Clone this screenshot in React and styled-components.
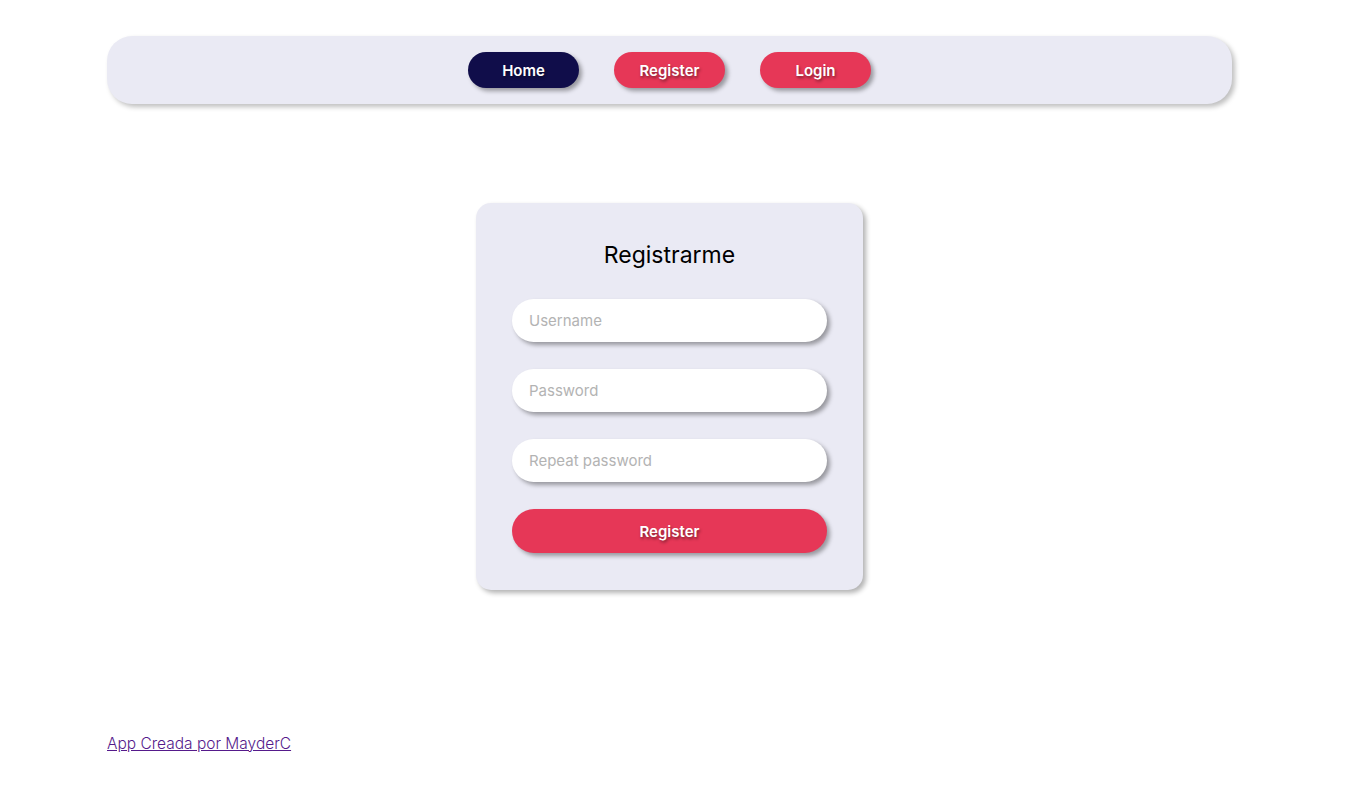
import React from 'react'
import styled, { createGlobalStyle } from 'styled-components'

const GlobalStyle = createGlobalStyle`
    body {
        margin: 0;
        background-color: #ffffff;
        font-family: Inter, "Noto Sans", sans-serif;
    }
`

const Page = styled.div`
    width: 1125px;
    margin-left: 107px;
    padding-top: 36px;
    min-height: 757px;
    display: flex;
    flex-direction: column;
`

const Nav = styled.nav`
    height: 68px;
    border-radius: 25px;
    background-color: #eaeaf4;
    box-shadow: 3px 3px 5px rgba(0,0,0,0.25);
    display: flex;
    align-items: center;
    justify-content: center;
    gap: 35px;
`

const NavBtn = styled.button`
    width: 111px;
    height: 36px;
    border: none;
    border-radius: 18px;
    background-color: ${({ $active }) => ($active ? '#100d4a' : '#e63757')};
    color: #ffffff;
    font-family: inherit;
    font-size: 15px;
    font-weight: 600;
    text-shadow: 1px 2px 3px rgba(0,0,0,0.45);
    box-shadow: 3px 3px 4px rgba(0,0,0,0.35);
    cursor: pointer;
`

const Main = styled.main`
    display: flex;
    justify-content: center;
    padding-top: 99px;
    flex: 1;
`

const Card = styled.form`
    width: 387px;
    box-sizing: border-box;
    padding: 36px 36px 37px;
    border-radius: 15px;
    background-color: #eaeaf4;
    box-shadow: 3px 3px 5px rgba(0,0,0,0.3);
    display: flex;
    flex-direction: column;
    gap: 27px;
    align-self: flex-start;
`

const Title = styled.h2`
    margin: 0 0 1px;
    text-align: center;
    font-size: 23px;
    font-weight: 400;
    color: #000000;
    line-height: 32px;
`

const Input = styled.input`
    height: 43px;
    box-sizing: border-box;
    border: none;
    border-radius: 22px;
    background-color: #ffffff;
    padding: 0 17px;
    font-family: inherit;
    font-size: 15px;
    box-shadow: 3px 3px 4px rgba(0,0,0,0.35);
    outline: none;
    &::placeholder {
        color: #b3b3b3;
    }
`

const Submit = styled(NavBtn)`
    width: 100%;
    height: 44px;
    border-radius: 22px;
`

const Footer = styled.footer`
    padding-bottom: 40px;
    font-size: 15.5px;
    font-weight: 300;
`

const Link = styled.a`
    color: #551a8b;
`

function App() {
  return (
    <>
        <GlobalStyle />
        <Page>
            <Nav>
                <NavBtn $active>Home</NavBtn>
                <NavBtn>Register</NavBtn>
                <NavBtn>Login</NavBtn>
            </Nav>
            <Main>
                <Card onSubmit={(e) => e.preventDefault()}>
                    <Title>Registrarme</Title>
                    <Input placeholder='Username' />
                    <Input type='password' placeholder='Password' />
                    <Input type='password' placeholder='Repeat password' />
                    <Submit type='submit'>Register</Submit>
                </Card>
            </Main>
            <Footer>
                <Link href='#'>App Creada por MayderC</Link>
            </Footer>
        </Page>
    </>
  )
}

export default App
